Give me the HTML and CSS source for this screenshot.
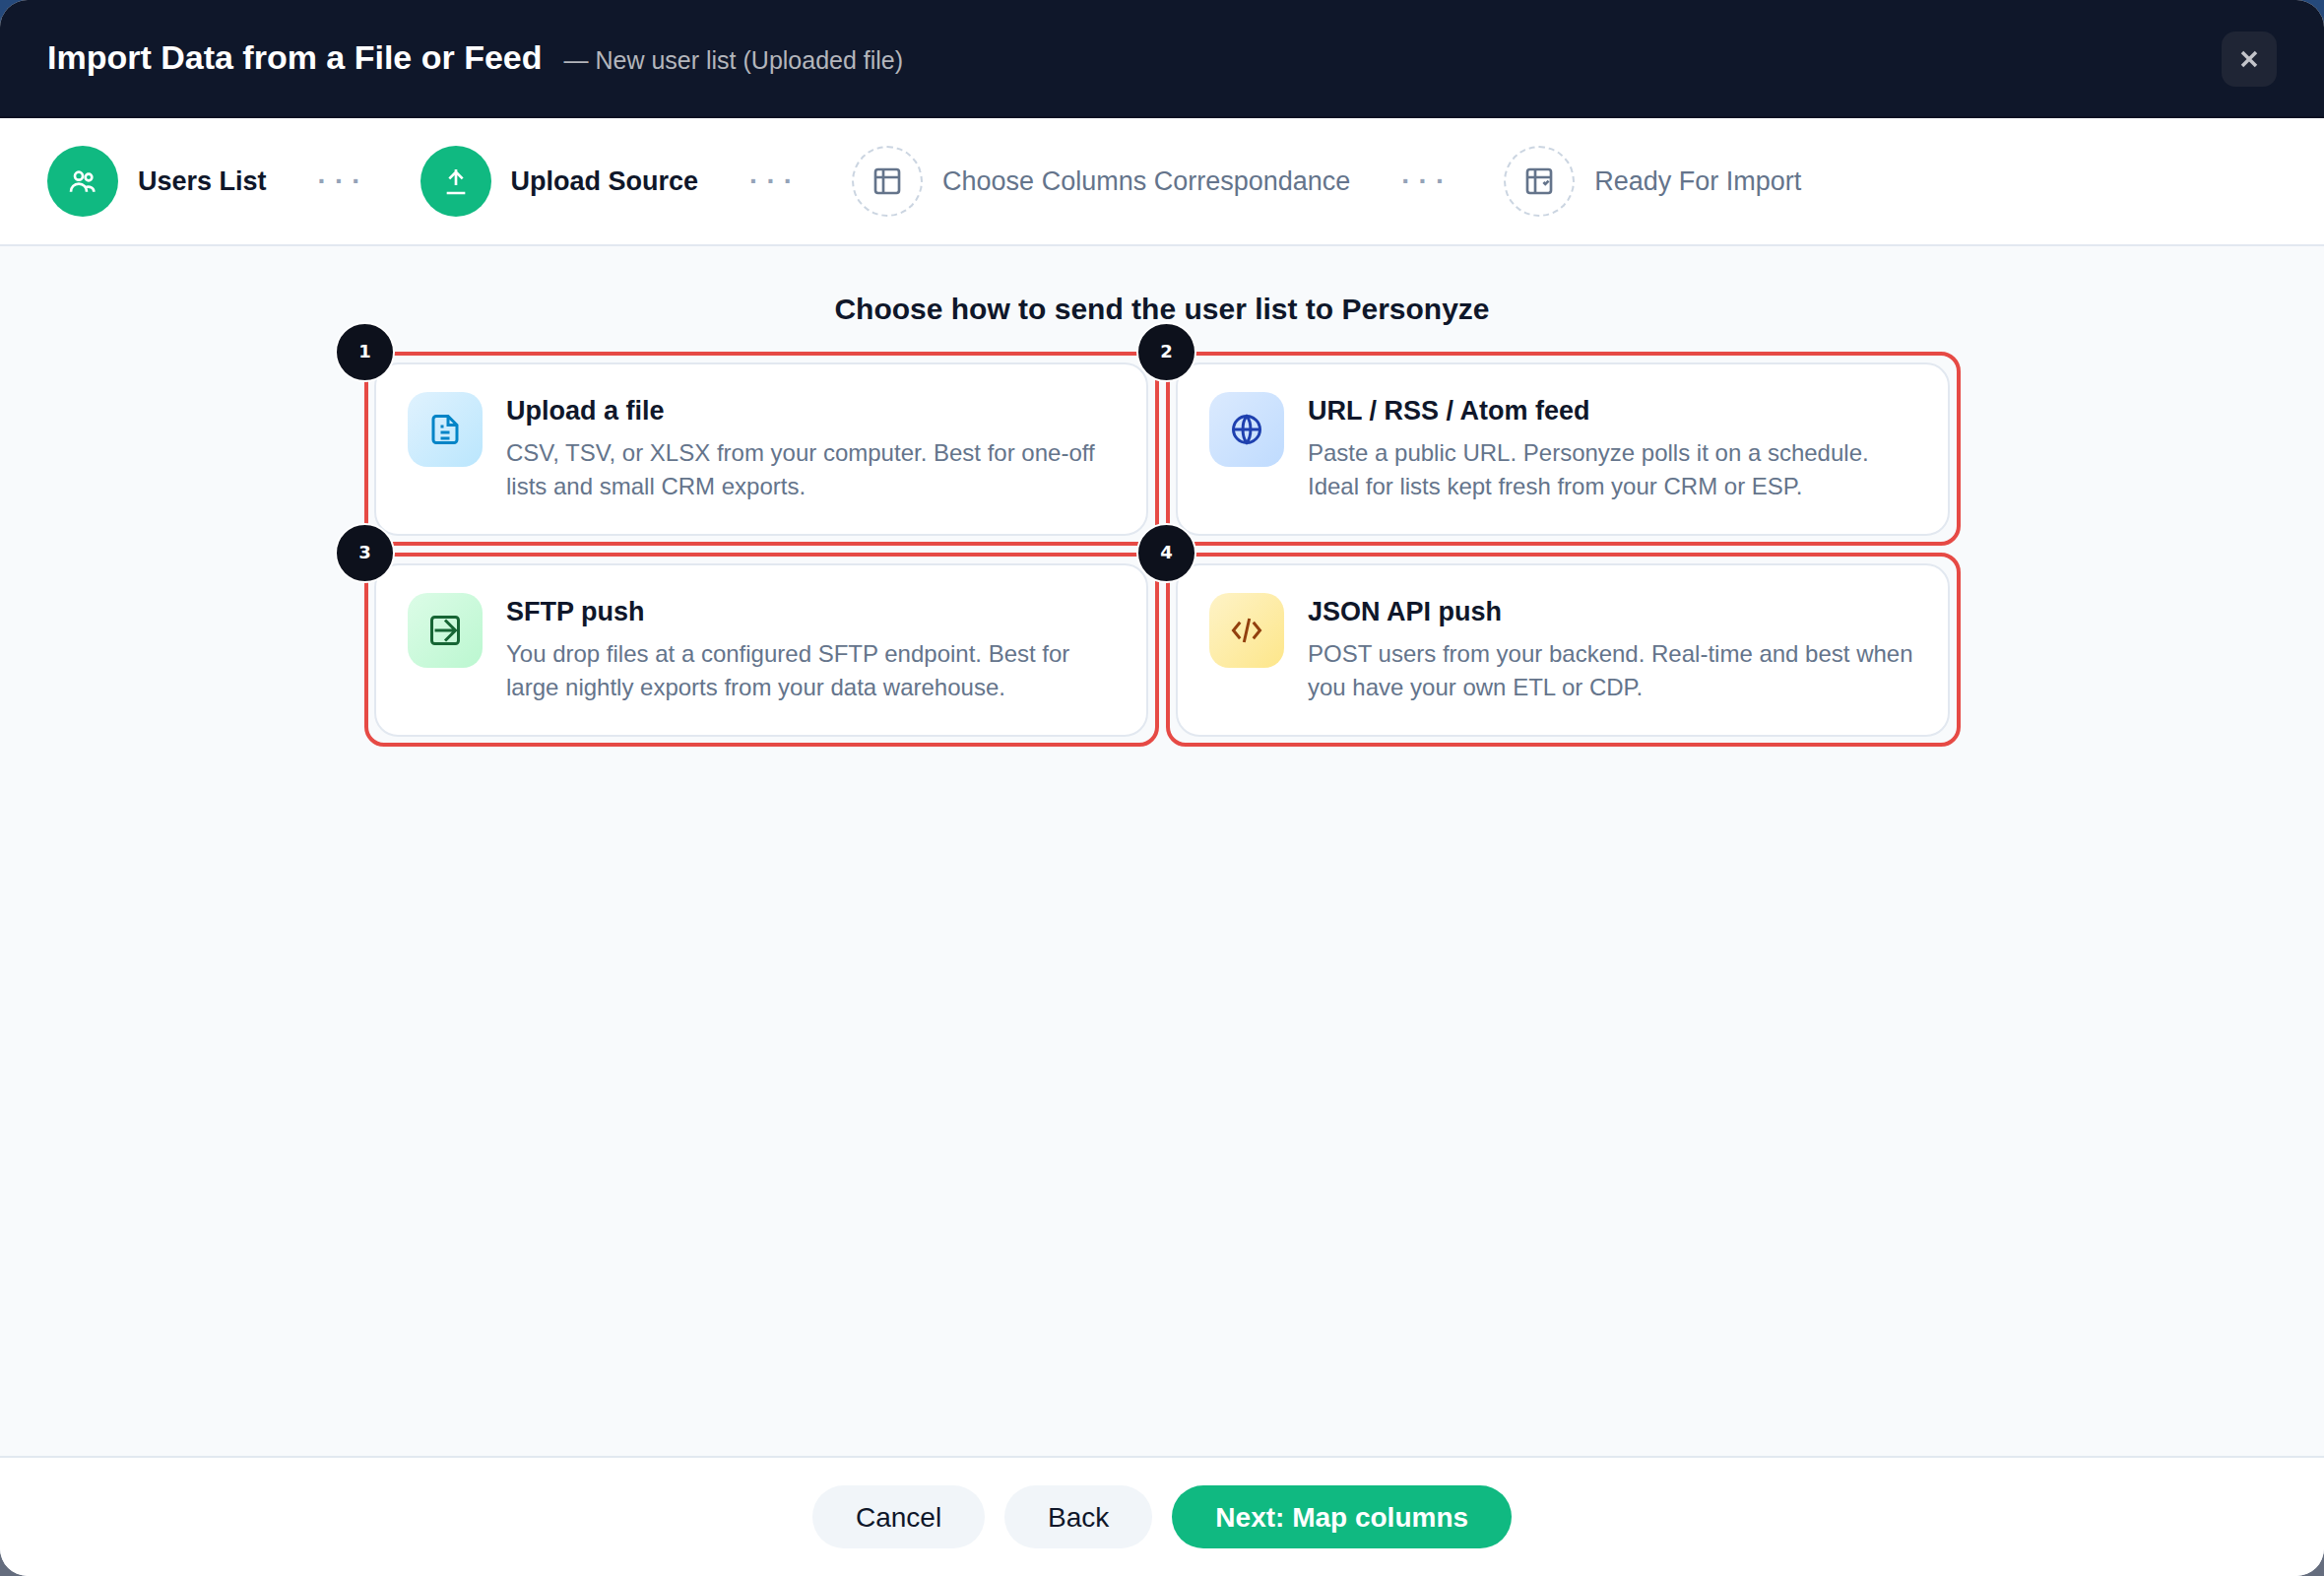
FILE: index.html
```html
<!DOCTYPE html>
<html lang="en">
<head>
    <meta charset="utf-8">
    <title>Import Data from a File or Feed</title>
    <link rel="stylesheet" href="styles.css">
</head>
<body>
    <div class="modal">
        <header class="modal-header">
            <div class="heading">
                <h1>Import Data from a File or Feed</h1>
                <span class="subtitle">— New user list (Uploaded file)</span>
            </div>
            <button type="button" class="close" aria-label="Close">
                <svg viewBox="0 0 24 24"><path d="M6 6l12 12M18 6L6 18"/></svg>
            </button>
        </header>

        <nav class="steps">
            <div class="step done">
                <span class="step-icon">
                    <svg viewBox="0 0 24 24"><circle cx="9" cy="8" r="3"/><circle cx="16.5" cy="9" r="2.5"/><path d="M3 20c0-3.5 2.5-6 6-6s6 2.5 6 6M14 16.5c3.5-1 6.5.5 6.5 3.5"/></svg>
                </span>
                <span>Users List</span>
            </div>
            <span class="dots">···</span>
            <div class="step done">
                <span class="step-icon">
                    <svg viewBox="0 0 24 24"><path d="M12 3v12M7 10l5-5 5 5M5 21h14"/></svg>
                </span>
                <span>Upload Source</span>
            </div>
            <span class="dots">···</span>
            <div class="step">
                <span class="step-icon">
                    <svg viewBox="0 0 24 24"><rect x="3" y="3" width="18" height="18" rx="2"/><path d="M3 9h18M9 3v18"/></svg>
                </span>
                <span>Choose Columns Correspondance</span>
            </div>
            <span class="dots">···</span>
            <div class="step">
                <span class="step-icon">
                    <svg viewBox="0 0 24 24"><rect x="3" y="3" width="18" height="18" rx="2"/><path d="M3 9h18M9 3v18M15.3 12.8l1.4 1.4 2.5-2.5"/></svg>
                </span>
                <span>Ready For Import</span>
            </div>
        </nav>

        <main class="content">
            <h2>Choose how to send the user list to Personyze</h2>
            <div class="cards">
                <button type="button" class="card">
                    <span class="badge">1</span>
                    <span class="tile sky">
                        <svg viewBox="0 0 24 24"><path d="M14 3H6a2 2 0 0 0-2 2v14a2 2 0 0 0 2 2h12a2 2 0 0 0 2-2V9zM14 3v6h6M9 10h2M9 14h6M9 18h6"/></svg>
                    </span>
                    <span class="card-body">
                        <span class="card-title">Upload a file</span>
                        <span class="card-text">CSV, TSV, or XLSX from your computer. Best for one-off lists and small CRM exports.</span>
                    </span>
                </button>
                <button type="button" class="card">
                    <span class="badge">2</span>
                    <span class="tile blue">
                        <svg viewBox="0 0 24 24"><circle cx="12" cy="12" r="9"/><path d="M3 12h18M12 3c3.5 4 3.5 14 0 18c-3.5-4-3.5-14 0-18z"/></svg>
                    </span>
                    <span class="card-body">
                        <span class="card-title">URL / RSS / Atom feed</span>
                        <span class="card-text">Paste a public URL. Personyze polls it on a schedule. Ideal for lists kept fresh from your CRM or ESP.</span>
                    </span>
                </button>
                <button type="button" class="card">
                    <span class="badge">3</span>
                    <span class="tile green">
                        <svg viewBox="0 0 24 24"><rect x="3" y="3" width="18" height="18" rx="2"/><path d="M5 12h14M12 5l7 7-7 7"/></svg>
                    </span>
                    <span class="card-body">
                        <span class="card-title">SFTP push</span>
                        <span class="card-text">You drop files at a configured SFTP endpoint. Best for large nightly exports from your data warehouse.</span>
                    </span>
                </button>
                <button type="button" class="card">
                    <span class="badge">4</span>
                    <span class="tile amber">
                        <svg viewBox="0 0 24 24"><path d="M7.5 6.5L3 12l4.5 5.5M16.5 6.5L21 12l-4.5 5.5M13.8 4l-3.6 16"/></svg>
                    </span>
                    <span class="card-body">
                        <span class="card-title">JSON API push</span>
                        <span class="card-text">POST users from your backend. Real-time and best when you have your own ETL or CDP.</span>
                    </span>
                </button>
            </div>
        </main>

        <footer class="modal-footer">
            <button type="button" class="btn">Cancel</button>
            <button type="button" class="btn">Back</button>
            <button type="button" class="btn primary">Next: Map columns</button>
        </footer>
    </div>
</body>
</html>
```
FILE: styles.css
```css
* { box-sizing: border-box; }
body {
    margin: 0;
    background: linear-gradient(#25497b 0, #25497b 16px, #656d7e 28px);
    font-family: "Liberation Sans", Arial, sans-serif;
    color: #0f172a;
}
button { font-family: inherit; color: inherit; cursor: pointer; }
svg { fill: none; stroke: currentColor; stroke-width: 2; }
.modal {
    display: flex;
    flex-direction: column;
    min-height: 100vh;
    background: #f8fafc;
    border-radius: 28px;
    overflow: hidden;
}

/* header */
.modal-header {
    display: flex;
    justify-content: space-between;
    padding: 32px 48px 30px;
    background: #0f172a;
    border-bottom: 2px solid #0b1122;
    color: #fff;
}
.heading { display: flex; align-items: baseline; gap: 22px; }
.heading h1 { margin: 0; font-size: 34px; line-height: 52px; }
.subtitle { font-size: 25px; color: #b4b6bc; }
.close {
    display: flex;
    align-items: center;
    justify-content: center;
    width: 56px;
    height: 56px;
    padding: 0;
    border: 0;
    border-radius: 14px;
    background: #1f2535;
    color: #c3c4ca;
}
.close svg { width: 28px; height: 28px; stroke-width: 3; }

/* steps */
.steps {
    display: flex;
    align-items: center;
    gap: 52px;
    padding: 28px 48px;
    background: #fff;
    border-bottom: 2px solid #e2e8f0;
}
.step {
    display: flex;
    align-items: center;
    gap: 20px;
    font-size: 27px;
    color: #64748b;
    white-space: nowrap;
}
.step-icon {
    display: flex;
    align-items: center;
    justify-content: center;
    width: 72px;
    height: 72px;
    border: 2px dashed #cbd5e1;
    border-radius: 50%;
}
.step-icon svg { width: 32px; height: 32px; }
.step.done { font-weight: bold; color: #0f172a; }
.step.done .step-icon { border: 0; background: #10b981; color: #fff; }
.dots { font-size: 28px; font-weight: bold; letter-spacing: 8px; color: #94a3b8; }

/* cards */
.content { flex: 1; padding: 46px 48px; }
.content h2 { margin: 0 0 36px; font-size: 30px; line-height: 36px; text-align: center; }
.cards {
    display: grid;
    grid-template-columns: 1fr 1fr;
    gap: 28px;
    max-width: 1600px;
    margin: 0 auto;
}
.card {
    position: relative;
    display: flex;
    align-items: flex-start;
    gap: 24px;
    padding: 28px 32px;
    border: 2px solid #e2e8f0;
    border-radius: 24px;
    background: #fff;
    text-align: left;
}
.card::before {
    content: "";
    position: absolute;
    inset: -13px -13px -12px -12px;
    border: 4px solid #e64a45;
    border-radius: 20px;
}
.badge {
    position: absolute;
    top: -43px;
    left: -42px;
    z-index: 1;
    width: 61px;
    height: 61px;
    border: 2px solid #fff;
    border-radius: 50%;
    background: #0d111c;
    color: #fff;
    font: bold 18px/55px "DejaVu Sans", sans-serif;
    text-align: center;
}
.tile {
    display: flex;
    align-items: center;
    justify-content: center;
    flex: none;
    width: 76px;
    height: 76px;
    border-radius: 20px;
}
.tile svg { width: 36px; height: 36px; }
.tile.sky { background: linear-gradient(135deg, #e0f2fe, #bae6fd); color: #0284c7; }
.tile.blue { background: linear-gradient(135deg, #dbeafe, #bfdbfe); color: #1e40af; }
.tile.green { background: linear-gradient(135deg, #dcfce7, #bbf7d0); color: #166534; }
.tile.amber { background: linear-gradient(135deg, #fef3c7, #fde68a); color: #92400e; }
.card-body { padding: 4px 0 3px; }
.card-title { display: block; margin-bottom: 10px; font-size: 27px; line-height: 31px; font-weight: bold; }
.card-text { display: block; font-size: 24px; line-height: 34px; color: #64748b; }

/* footer */
.modal-footer {
    display: flex;
    justify-content: center;
    gap: 20px;
    padding: 28px 48px;
    background: #fff;
    border-top: 2px solid #e2e8f0;
}
.btn {
    height: 64px;
    padding: 1px 44px 0;
    border: 0;
    border-radius: 32px;
    background: #f1f5f9;
    font-size: 28px;
}
.btn.primary { background: #10b981; color: #fff; font-weight: bold; }
```
